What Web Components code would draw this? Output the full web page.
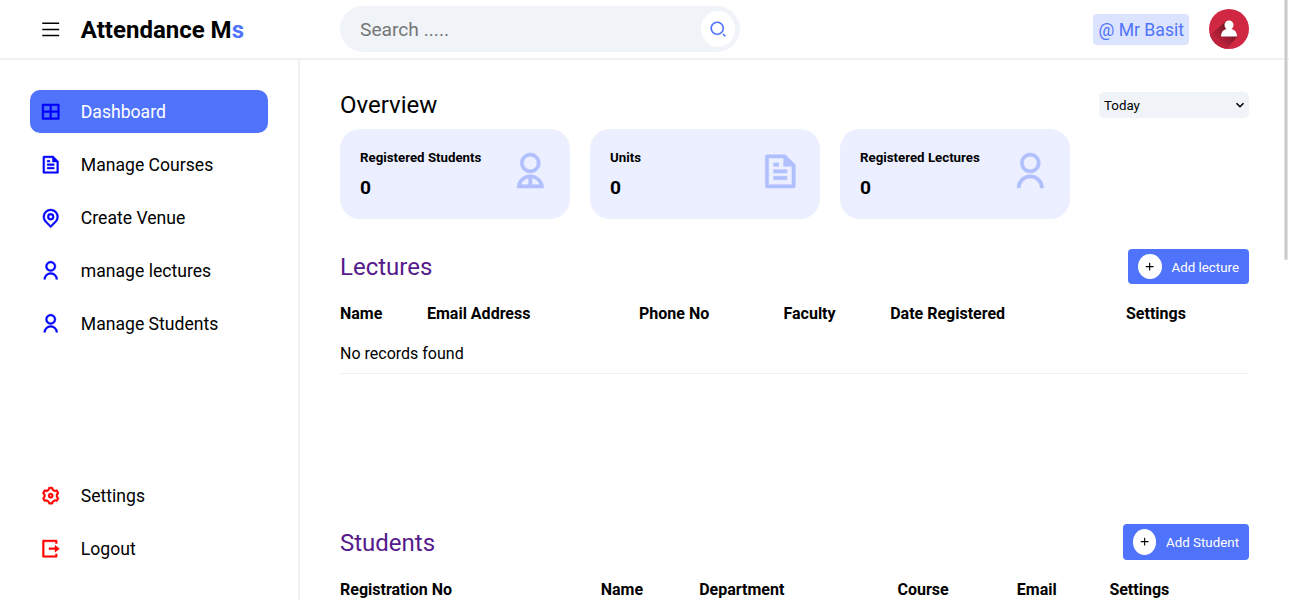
<!DOCTYPE html>
<html lang="en">
<head>
<meta charset="utf-8">
<title>Attendance Ms</title>
<style>
html, body { margin: 0; height: 100%; overflow: hidden; background: #fff; font-family: Roboto, sans-serif; color: #000; }
</style>
</head>
<body>
<ams-app></ams-app>
<script>
const ICONS = {
  menu: 'M2.500 4h19.500v1.700H2.500V4zm0 7.200h19.500v1.700H2.500zm0 7h19.500v1.700H2.500z',
  grid: 'M21 3a1 1 0 0 1 1 1v16a1 1 0 0 1-1 1H3a1 1 0 0 1-1-1V4a1 1 0 0 1 1-1h18zM11 13H4v6h7v-6zm9 0h-7v6h7v-6zm-9-8H4v6h7V5zm9 0h-7v6h7V5z',
  file: 'M21 8v12.993A1 1 0 0 1 20.007 22H3.993A.993.993 0 0 1 3 21.008V2.992C3 2.455 3.449 2 4.002 2h10.995L21 8zm-2 1h-5V4H5v16h14V9zM8 7h3v2H8V7zm0 4h8v2H8v-2zm0 4h8v2H8v-2z',
  pin: 'M12 20.9l4.95-4.95a7 7 0 1 0-9.9 0L12 20.9zm0 2.828l-6.364-6.364a9 9 0 1 1 12.728 0L12 23.728zM12 13a2 2 0 1 0 0-4 2 2 0 0 0 0 4zm0 2a4 4 0 1 1 0-8 4 4 0 0 1 0 8z',
  user: 'M4 22a8 8 0 1 1 16 0h-2a6 6 0 1 0-12 0H4zm8-9c-3.315 0-6-2.685-6-6s2.685-6 6-6 6 2.685 6 6-2.685 6-6 6zm0-2c2.21 0 4-1.79 4-4s-1.79-4-4-4-4 1.79-4 4 1.79 4 4 4z',
  user2: 'M4 22a8 8 0 1 1 16 0H4zm9-5.917V20h4.659A6.009 6.009 0 0 0 13 16.083zM11 20v-3.917A6.009 6.009 0 0 0 6.341 20H11zm1-7c-3.315 0-6-2.685-6-6s2.685-6 6-6 6 2.685 6 6-2.685 6-6 6zm0-2c2.21 0 4-1.79 4-4s-1.79-4-4-4-4 1.79-4 4 1.79 4 4 4z',
  gear: 'M3.34 17a10.018 10.018 0 0 1-.978-2.326 3 3 0 0 0 .002-5.347A9.99 9.99 0 0 1 4.865 4.99a3 3 0 0 0 4.631-2.674 9.99 9.99 0 0 1 5.007.002 3 3 0 0 0 4.632 2.672c.579.59 1.093 1.261 1.525 2.01.433.749.757 1.53.978 2.326a3 3 0 0 0-.002 5.347 9.99 9.99 0 0 1-2.501 4.337 3 3 0 0 0-4.631 2.674 9.99 9.99 0 0 1-5.007-.002 3 3 0 0 0-4.632-2.672A10.018 10.018 0 0 1 3.34 17zm5.66.196a4.993 4.993 0 0 1 2.25 2.77c.499.047 1 .048 1.499.001A4.993 4.993 0 0 1 15 17.197a4.993 4.993 0 0 1 3.525-.565c.29-.408.54-.843.748-1.298A4.993 4.993 0 0 1 18 12c0-1.26.47-2.437 1.273-3.334a8.126 8.126 0 0 0-.75-1.298A4.993 4.993 0 0 1 15 6.804a4.993 4.993 0 0 1-2.25-2.77c-.499-.047-1-.048-1.499-.001A4.993 4.993 0 0 1 9 6.803a4.993 4.993 0 0 1-3.525.565 7.99 7.99 0 0 0-.748 1.298A4.993 4.993 0 0 1 6 12c0 1.26-.47 2.437-1.273 3.334a8.126 8.126 0 0 0 .75 1.298A4.993 4.993 0 0 1 9 17.196zM12 15a3 3 0 1 1 0-6 3 3 0 0 1 0 6zm0-2a1 1 0 1 0 0-2 1 1 0 0 0 0 2z',
  logout: 'M3.500 22a1 1 0 0 1-1-1V3a1 1 0 0 1 1-1h15a1 1 0 0 1 1 1v3h-2V4H4.500v16h13v-2h2v3a1 1 0 0 1-1 1H3.500zm13.500-6v-3h-7v-2h7V8l5 4-5 4z',
  search: 'M11 2c4.968 0 9 4.032 9 9s-4.032 9-9 9-9-4.032-9-9 4.032-9 9-9zm0 16c3.867 0 7-3.133 7-7 0-3.868-3.133-7-7-7-3.868 0-7 3.132-7 7 0 3.867 3.132 7 7 7zm8.485.071l2.829 2.828-1.415 1.415-2.828-2.829 1.414-1.414z',
  add: 'M11 11V5h2v6h6v2h-6v6h-2v-6H5v-2z'
};
function define(name, render) {
  customElements.define(name, class extends HTMLElement {
    constructor() { super(); this.attachShadow({ mode: 'open' }); }
    connectedCallback() { this.shadowRoot.innerHTML = render(this); }
  });
}
define('ams-icon', el => `
<style>:host{display:block;flex:none;width:var(--size,20.8px);height:var(--size,20.8px)}svg{display:block;width:100%;height:100%;overflow:visible;transform:translate(var(--nudge,0),var(--nudge,0));fill:currentColor;stroke:currentColor;stroke-width:var(--weight,0)}</style>
<svg viewBox="0 0 24 24"><path d="${ICONS[el.getAttribute('name')]}"/></svg>`);

define('ams-avatar', () => `
<style>:host{display:block;width:40px;height:40px}svg{display:block}</style>
<svg width="40" height="40" viewBox="0 0 40 40">
<defs><clipPath id="c"><circle cx="20" cy="20" r="20"/></clipPath>
<linearGradient id="g" gradientUnits="userSpaceOnUse" x1="20" y1="22" x2="10" y2="33"><stop offset="0" stop-color="#7d1728"/><stop offset="1" stop-color="#b32038" stop-opacity=".7"/></linearGradient></defs>
<circle cx="20" cy="20" r="20" fill="#d02842"/>
<path clip-path="url(#c)" fill="url(#g)" d="M16.500 12.500L-2 29l18 13 12-14-8-12z"/>
<path fill="#fff" d="M20 11.500a4.500 4.600 0 0 1 4.500 4.600c0 1.700-.7 3-1.800 3.800 3.300.9 5.300 3.500 5.300 7.600H12c0-4.100 2-6.700 5.300-7.600-1.100-.8-1.800-2.100-1.800-3.800a4.500 4.600 0 0 1 4.500-4.600z"/>
</svg>`);

define('ams-search', () => `
<style>
:host{display:flex;align-items:center;justify-content:space-between;box-sizing:border-box;width:400px;height:46px;padding:0 5px 0 20px;border-radius:23px;background:#f0f4f9}
input{border:0;outline:0;padding:0;background:none;font:19.2px Roboto,sans-serif;width:300px;height:24px}
input::placeholder{color:#757575;opacity:1}
span{display:flex;align-items:center;justify-content:center;width:34px;height:36px;border-radius:50%;background:#fff;color:#5073fb;--size:18px;--weight:.2;--nudge:0px}
</style><input placeholder="Search ....."><span><ams-icon name="search"></ams-icon></span>`);

define('ams-header', () => `
<style>
:host{display:flex;align-items:center;box-sizing:border-box;height:60px;border-bottom:2px solid #f1f1f1;padding:0 40px}
.logo{display:flex;align-items:center;gap:20px;width:300px;--nudge:.1px}
.logo ams-icon{padding-top:1px}
h2{margin:0;padding-top:2px;font-size:24px;line-height:28px;font-weight:700}
h2 span{color:#5073fb}
.user{display:flex;align-items:center;gap:20px;margin-left:auto}
.name{background:#dce3fe;color:#5073fb;border-radius:4px;font-size:17.6px;line-height:21px;padding:6px 5px 4px 5.600px}
</style>
<div class="logo"><ams-icon name="menu"></ams-icon><h2>Attendance M<span>s</span></h2></div>
<ams-search></ams-search>
<div class="user"><div class="name">@ Mr Basit</div><ams-avatar></ams-avatar></div>`);

define('ams-nav-item', el => `
<style>
:host{display:flex;align-items:center;gap:20px;box-sizing:border-box;width:238px;height:43px;padding-left:10px;border-radius:10px;font-size:17.6px;--weight:.5;--nudge:.3px}
:host([active]){background:#5073fb;color:#fff}
ams-icon{color:#00f}
:host([danger]) ams-icon{color:#f00}
</style><ams-icon name="${el.getAttribute('icon')}"></ams-icon><span><slot></slot></span>`);

define('ams-sidebar', () => `
<style>
:host{display:flex;flex-direction:column;justify-content:space-between;box-sizing:border-box;width:300px;height:100%;padding:30px;border-right:2px solid #f1f1f1}
nav{display:flex;flex-direction:column;gap:10px}
</style>
<nav>
<ams-nav-item icon="grid" active>Dashboard</ams-nav-item>
<ams-nav-item icon="file">Manage Courses</ams-nav-item>
<ams-nav-item icon="pin">Create Venue</ams-nav-item>
<ams-nav-item icon="user">manage lectures</ams-nav-item>
<ams-nav-item icon="user">Manage Students</ams-nav-item>
</nav>
<nav>
<ams-nav-item icon="gear" danger>Settings</ams-nav-item>
<ams-nav-item icon="logout" danger>Logout</ams-nav-item>
</nav>`);

define('ams-card', el => `
<style>
:host{display:flex;justify-content:space-between;box-sizing:border-box;width:230px;height:90px;padding:20px;border-radius:20px;background:#ecefff;--size:40px;--nudge:.3px;--weight:.3}
h5{margin:0 0 10px;font-size:13.28px;line-height:17px;font-weight:700}
p{margin:0;font-size:19.2px;line-height:24px;font-weight:700}
ams-icon{color:#b0c0fd;margin-top:2px}
</style>
<div><h5>${el.getAttribute('label')}</h5><p><slot></slot></p></div><ams-icon name="${el.getAttribute('icon')}"></ams-icon>`);

define('ams-button', () => `
<style>
:host{display:flex;align-items:center;gap:10px;box-sizing:border-box;height:var(--h,35px);padding:0 10px;border-radius:4px;background:#5073fb;color:#fff;font-size:13.333px}
i{display:flex;align-items:center;justify-content:center;width:23.33px;height:calc(var(--h,35px) - 10px);border-radius:50%;background:#fff;color:#000;--size:13.333px}
span{padding-top:1px}
</style><i><ams-icon name="add"></ams-icon></i><span><slot></slot></span>`);

define('ams-table', el => `
<style>
:host{display:block;font-size:16px;line-height:20px}
.head{display:grid;grid-template-columns:${el.getAttribute('columns')};font-weight:700;padding:10px 0}
.row{padding:10px 0 9px;border-bottom:1px solid #f1f1f1}
</style>
<div class="head">${el.getAttribute('heads').split(',').map(h => `<span>${h}</span>`).join('')}</div><slot></slot>
${el.hasAttribute('empty') ? '<div class="row">No records found</div>' : ''}`);

define('ams-section', el => `
<style>
:host{display:block;height:275px}
header{display:flex;align-items:flex-start;justify-content:space-between;height:36px;margin-bottom:var(--gap,9px)}
h2{margin:var(--title-top,4px) 0 0;font-size:24px;line-height:28px;font-weight:400;color:#551a8b}
</style>
<header><h2>${el.getAttribute('title-text')}</h2><slot name="action"></slot></header><slot></slot>`);

define('ams-main', () => `
<style>
:host{display:block;box-sizing:border-box;flex:1;min-width:0;height:100%;overflow:hidden;padding:30px 40px 0}
.top{display:flex;align-items:center;justify-content:space-between;height:30px;margin-bottom:9px}
h2{margin:0;font-size:24px;line-height:28px;font-weight:400}
label{display:grid;align-items:center;width:150px;height:26px;border-radius:5px;background:#f0f4f9}
select,label svg{grid-area:1/1}
select{appearance:none;width:150px;height:26px;border:0;background:none;font:13.333px Roboto,sans-serif;color:#000;padding:0 5px}
label svg{justify-self:end;margin-right:4px;pointer-events:none}
.cards{display:flex;gap:20px;margin-bottom:30px}
</style>
<div class="top"><h2>Overview</h2><label><select><option>Today</option></select><svg width="10" height="8" viewBox="0 0 10 8"><path d="M1.500 2.200L5 5.700l3.500-3.500" fill="none" stroke="#000" stroke-width="1.600"/></svg></label></div>
<div class="cards">
<ams-card label="Registered Students" icon="user2">0</ams-card>
<ams-card label="Units" icon="file">0</ams-card>
<ams-card label="Registered Lectures" icon="user">0</ams-card>
</div>
<ams-section title-text="Lectures"><ams-button slot="action">Add lecture</ams-button>
<ams-table empty heads="Name,Email Address,Phone No,Faculty,Date Registered,Settings" columns="87px 212px 144.500px 106.700px 235.800px 1fr"></ams-table></ams-section>
<ams-section title-text="Students" style="--gap:10px;--title-top:5px"><ams-button slot="action" style="--h:36px">Add Student</ams-button>
<ams-table heads="Registration No,Name,Department,Course,Email,Settings" columns="260.700px 98.500px 198.300px 119.300px 92.600px 1fr"></ams-table></ams-section>`);

define('ams-app', () => `
<style>
:host{display:flex;flex-direction:column;height:100vh;position:relative;overflow:hidden}
.body{display:flex;flex:1;min-height:0}
.thumb{position:absolute;box-sizing:border-box;right:1px;top:0;width:4px;height:260px;background:#cacaca;border:solid #e2e2e2;border-width:0 1px 1px}
</style>
<ams-header></ams-header>
<div class="body"><ams-sidebar></ams-sidebar><ams-main></ams-main></div>
<div class="thumb"></div>`);
</script>
</body>
</html>
